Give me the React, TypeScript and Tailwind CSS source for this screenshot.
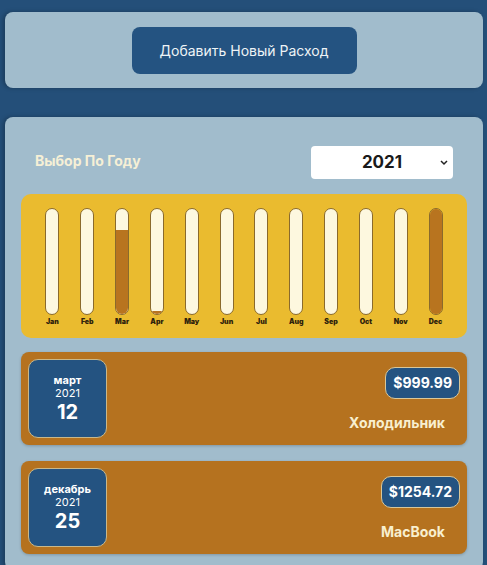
import { useState } from "react";

type Expense = {
  id: string;
  title: string;
  amount: number;
  date: Date;
};

const EXPENSES: Expense[] = [
  { id: "e1", title: "Холодильник", amount: 999.99, date: new Date(2021, 2, 12) },
  { id: "e2", title: "MacBook", amount: 1254.72, date: new Date(2021, 11, 25) },
];

const MONTHS = ["Jan", "Feb", "Mar", "Apr", "May", "Jun", "Jul", "Aug", "Sep", "Oct", "Nov", "Dec"];

// fill values read off the chart
const FILL = [0, 0, 0.8, 0.03, 0, 0, 0, 0, 0, 0, 0, 1];

function ChartBar({ label, fill }: { label: string; fill: number }) {
  return (
    <div className="flex flex-1 flex-col items-center">
      <div className="flex h-[107px] w-[14px] flex-col justify-end overflow-hidden rounded-full border border-[#8a6a2c] bg-[#fdf8df]">
        <div className="w-full bg-[#b8741f]" style={{ height: `${fill * 100}%` }} />
      </div>
      <span className="mt-[2px] text-[7px] font-black leading-[10px] text-[#2e220c]">{label}</span>
    </div>
  );
}

function ExpenseDate({ date }: { date: Date }) {
  const month = date.toLocaleString("ru-RU", { month: "long" });
  return (
    <div className="flex h-[79px] w-[79px] flex-col items-center justify-center rounded-[10px] border border-[#c9b88a] bg-[#245381] text-white">
      <span className="text-[11px] font-bold leading-[13px]">{month}</span>
      <span className="text-[11px] leading-[13px]">{date.getFullYear()}</span>
      <span className="text-[20px] font-bold leading-[24px]">{date.getDate()}</span>
    </div>
  );
}

function ExpenseItem({ expense }: { expense: Expense }) {
  return (
    <div className="flex h-[93px] justify-between rounded-lg bg-[#b5721f] p-[7px] shadow-[0_1px_3px_rgba(0,0,0,0.2)]">
      <ExpenseDate date={expense.date} />
      <div className="flex flex-col items-end pt-[8px]">
        <div className="rounded-[10px] border border-[#d8c79a] bg-[#245381] px-[7px] py-[5px] text-[14px] font-bold leading-[20px] text-white">
          ${expense.amount}
        </div>
        <div className="mr-[15px] mt-[13px] text-[14px] font-bold text-[#f8efcf]">{expense.title}</div>
      </div>
    </div>
  );
}

export default function App() {
  const [year, setYear] = useState("2021");

  return (
    <div className="min-h-screen bg-[#244f79] pl-[5px] pr-[4px] pt-[12px] font-['Inter',sans-serif]">
      <div className="flex h-[76px] items-center justify-center rounded-lg bg-[#a1bccc] shadow-[-2px_0_4px_rgba(0,0,0,0.25)]">
        <button className="h-[47px] w-[225px] rounded-lg bg-[#245381] text-[14px] text-[#eef3f6]">
          Добавить Новый Расход
        </button>
      </div>

      <div className="mt-[29px] rounded-lg bg-[#a1bccc] px-[16px] pb-[16px] pt-[29px] shadow-[-2px_0_4px_rgba(0,0,0,0.25)]">
        <div className="flex items-center justify-between pl-[14px] pr-[14px]">
          <label className="-mt-[4px] text-[14px] font-bold text-[#f6f0d6]">Выбор По Году</label>
          <div className="relative">
            <select
              value={year}
              onChange={(e) => setYear(e.target.value)}
              className="h-[33px] w-[142px] appearance-none rounded-[4px] bg-white text-center text-[17px] font-bold text-[#1a1a1a]"
            >
              <option>2022</option>
              <option>2021</option>
              <option>2020</option>
              <option>2019</option>
            </select>
            <svg className="pointer-events-none absolute right-[5px] top-[13px] h-[7px] w-[8px]" viewBox="0 0 8 7" fill="none">
              <path d="M1 2l3 3 3-3" stroke="#222" strokeWidth="1.5" />
            </svg>
          </div>
        </div>

        <div className="mt-[15px] flex h-[144px] rounded-[10px] bg-[#eabb2f] px-[14px] pt-[14px]">
          {MONTHS.map((m, i) => (
            <ChartBar key={m} label={m} fill={FILL[i]} />
          ))}
        </div>

        <div className="mt-[14px] flex flex-col gap-[16px]">
          {EXPENSES.map((e) => (
            <ExpenseItem key={e.id} expense={e} />
          ))}
        </div>
      </div>
    </div>
  );
}
